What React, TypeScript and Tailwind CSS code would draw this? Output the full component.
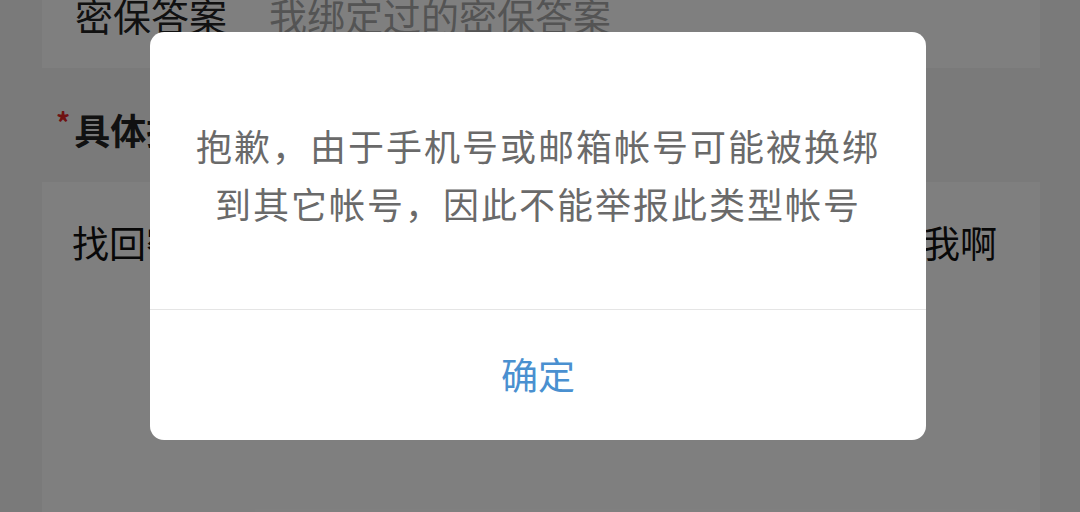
import React from "react";

export default function App() {
  return (
    <div
      className="relative h-[512px] w-[1080px] overflow-hidden bg-[#f5f5f5]"
      style={{ fontFamily: '"Noto Sans CJK SC", sans-serif' }}
    >
      <div className="flex flex-col">
        <div className="-mt-[40px] ml-[42px] mr-[40px] flex h-[108px] items-center bg-white pl-[33px] pt-[2px]">
          <span className="text-[38px] leading-none text-[#222]">密保答案</span>
          <span className="ml-[42px] text-[38px] leading-none text-[#a8a8a8]">我绑定过的密保答案</span>
        </div>
        <div className="mt-[43px] flex items-center pl-[56px]">
          <span className="mr-[4px] -mt-[14px] text-[28px] font-bold leading-none text-[#e02424]">*</span>
          <span className="text-[36px] font-bold leading-none text-[#222]">具体描述</span>
        </div>
        <div className="ml-[42px] mr-[40px] mt-[35px] h-[400px] bg-white pl-[30px] pt-[42px]">
          <p className="whitespace-nowrap text-[37px] leading-none text-[#111]">
            找回密码的时候一直说我的答案是错的真的是要气死我啊
          </p>
        </div>
      </div>

      <div className="absolute inset-0 bg-black/50" />

      <div className="absolute left-[150px] top-[32px] w-[776px] overflow-hidden rounded-[14px] bg-white">
        <div className="whitespace-nowrap pb-[77px] pt-[84px] text-center text-[36px] leading-[58px] tracking-[2px] text-[#6a6a6a]">
          抱歉，由于手机号或邮箱帐号可能被换绑
          <br />
          到其它帐号，因此不能举报此类型帐号
        </div>
        <div className="h-px bg-[#e5e5e5]" />
        <div className="flex h-[130px] items-center justify-center text-[37px] text-[#4a90d0]">
          确定
        </div>
      </div>
    </div>
  );
}
